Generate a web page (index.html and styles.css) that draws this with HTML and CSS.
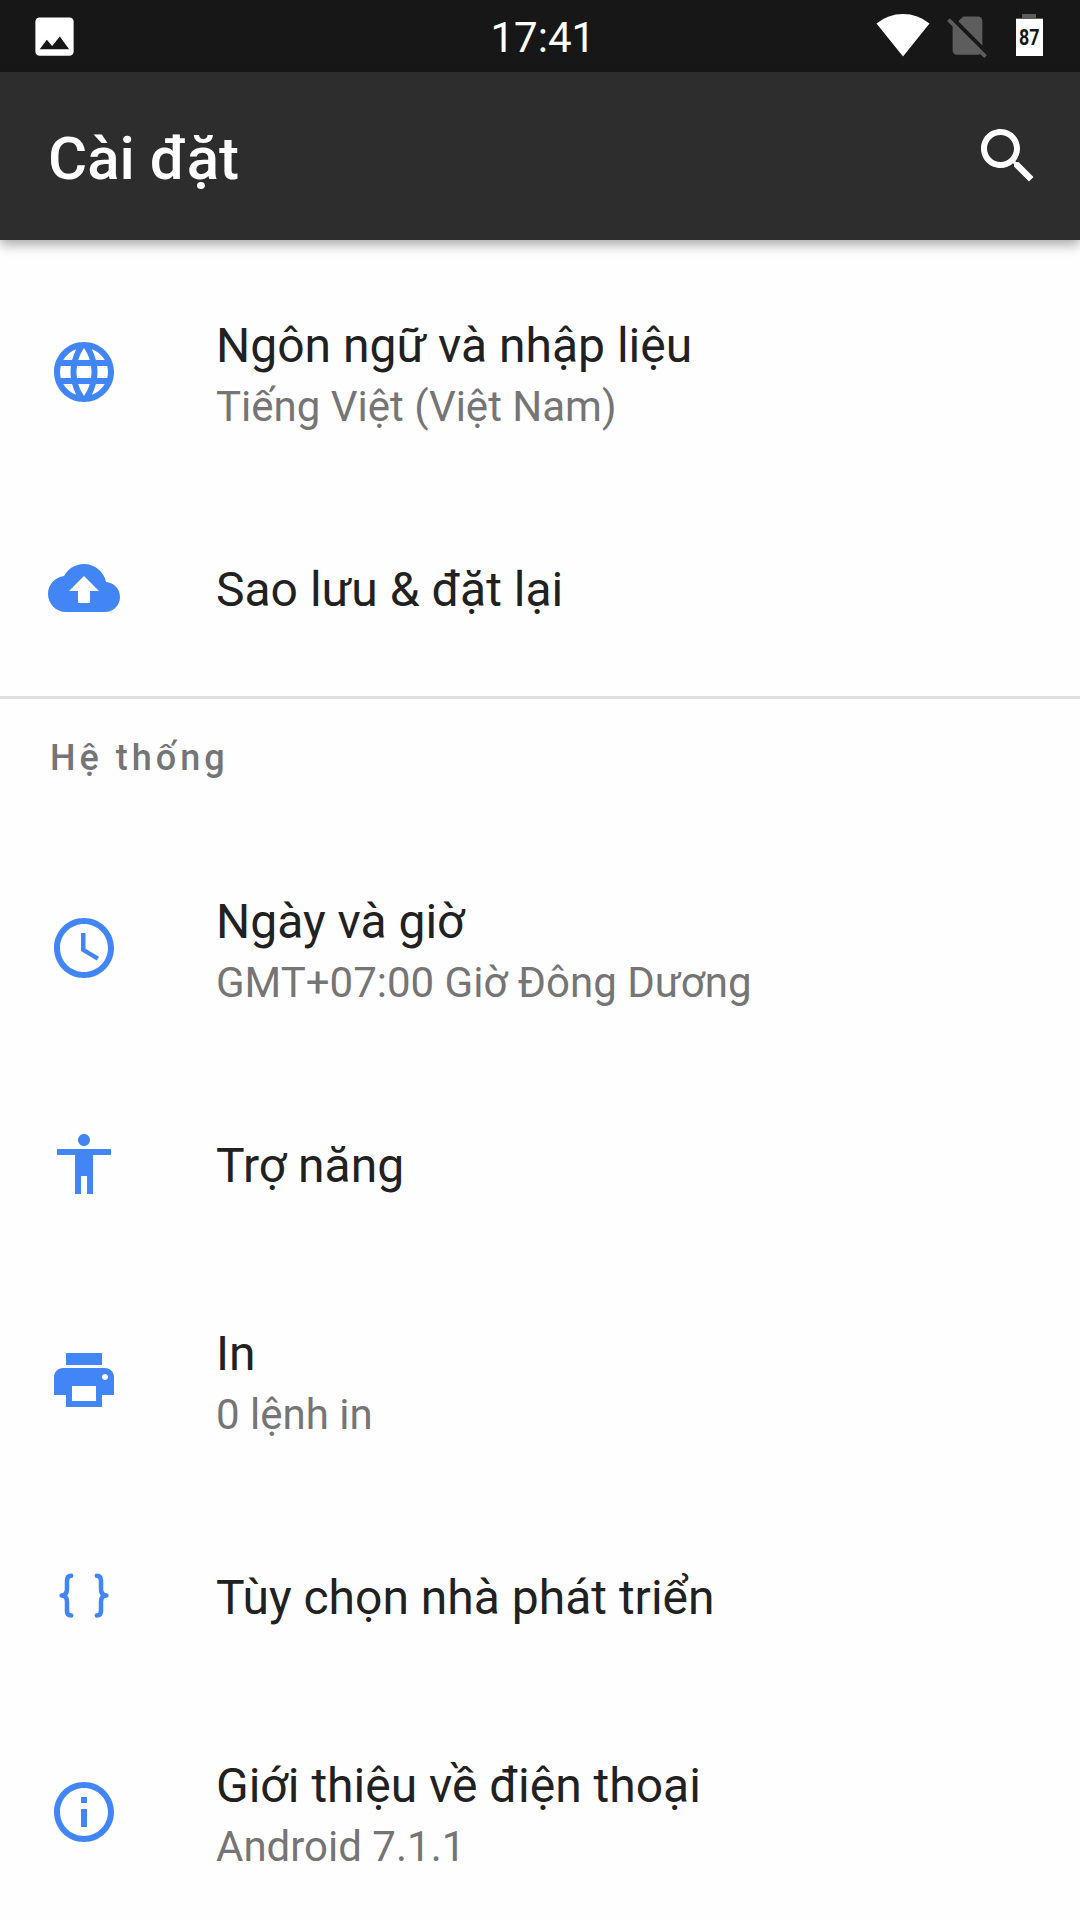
FILE: index.html
```html
<!DOCTYPE html>
<html lang="vi">
<head>
    <meta charset="UTF-8">
    <meta name="viewport" content="width=device-width, initial-scale=1.0">
    <title>Cài đặt</title>
    <link rel="stylesheet" href="styles.css">
</head>
<body>

<div class="status-bar">
    <div class="status-left">
        <svg class="status-icon" viewBox="0 0 24 24"><path d="M21 19V5a2 2 0 0 0-2-2H5a2 2 0 0 0-2 2v14a2 2 0 0 0 2 2h14a2 2 0 0 0 2-2z" fill="#fff"/><path d="M5 18l3.4-4.5 2.5 3L14.5 12l4.4 6z" fill="#171717"/></svg>
    </div>
    <div class="clock">17:41</div>
    <div class="status-right">
        <svg class="wifi" viewBox="0 0 54 44"><path d="M0.5 10.5Q12 1 27 1T53.5 10.5L27 43.5z"/></svg>
        <svg class="status-icon no-sim" viewBox="0 0 24 24"><path d="M18.99 5c0-1.1-.89-2-1.99-2h-7L7.66 5.34 19 16.68 18.99 5zM3.65 3.88L2.38 5.15 5 7.77V19c0 1.1.9 2 2 2h10.01c.35 0 .67-.1.96-.26l1.88 1.88 1.27-1.27L3.65 3.88z"/></svg>
        <svg class="battery" viewBox="0 0 27 42">
            <path d="M6 0h14v4h7v2H0V4h6z" fill="#5d5d5d"/>
            <path d="M0 5h27v37H0z" fill="#fff"/>
            <text x="3" y="31" textLength="20.5" lengthAdjust="spacingAndGlyphs">87</text>
        </svg>
    </div>
</div>

<div class="toolbar">
    <h1>Cài đặt</h1>
    <svg class="icon" viewBox="0 0 24 24"><path d="M15.5 14h-.79l-.28-.27C15.41 12.59 16 11.11 16 9.5 16 5.91 13.09 3 9.5 3S3 5.91 3 9.5 5.91 16 9.5 16c1.61 0 3.09-.59 4.23-1.57l.27.28v.79l5 4.99L20.49 19l-4.99-5zm-6 0C7.01 14 5 11.99 5 9.5S7.01 5 9.5 5 14 7.01 14 9.5 11.99 14 9.5 14z"/></svg>
</div>

<div class="settings">
    <div class="row">
        <svg class="icon" viewBox="0 0 24 24"><path d="M11.99 2C6.47 2 2 6.48 2 12s4.47 10 9.99 10C17.52 22 22 17.52 22 12S17.52 2 11.99 2zm6.93 6h-2.95c-.32-1.25-.78-2.45-1.38-3.56 1.84.63 3.37 1.91 4.33 3.56zM12 4.04c.83 1.2 1.48 2.53 1.91 3.96h-3.82c.43-1.43 1.08-2.76 1.91-3.96zM4.26 14C4.1 13.36 4 12.69 4 12s.1-1.36.26-2h3.38c-.08.66-.14 1.32-.14 2s.06 1.34.14 2H4.26zm.82 2h2.95c.32 1.25.78 2.45 1.38 3.56-1.84-.63-3.37-1.9-4.33-3.56zm2.95-8H5.08c.96-1.66 2.49-2.93 4.33-3.56C8.81 5.55 8.35 6.75 8.03 8zM12 19.96c-.83-1.2-1.48-2.53-1.91-3.96h3.82c-.43 1.43-1.08 2.76-1.91 3.96zM14.34 14H9.66c-.09-.66-.16-1.32-.16-2s.07-1.35.16-2h4.68c.09.65.16 1.32.16 2s-.07 1.34-.16 2zm.25 5.56c.6-1.11 1.06-2.31 1.38-3.56h2.95c-.96 1.65-2.49 2.93-4.33 3.56zM16.36 14c.08-.66.14-1.32.14-2s-.06-1.34-.14-2h3.38c.16.64.26 1.31.26 2s-.1 1.36-.26 2h-3.38z"/></svg>
        <div class="label">
            <div class="title">Ngôn ngữ và nhập liệu</div>
            <div class="summary">Tiếng Việt (Việt Nam)</div>
        </div>
    </div>
    <div class="row">
        <svg class="icon" viewBox="0 0 24 24"><path d="M19.35 10.04C18.67 6.59 15.64 4 12 4 9.11 4 6.6 5.64 5.35 8.04 2.34 8.36 0 10.91 0 14c0 3.31 2.69 6 6 6h13c2.76 0 5-2.24 5-5 0-2.64-2.05-4.78-4.65-4.96zM14 13v4h-4v-4H7l5-5 5 5h-3z"/></svg>
        <div class="label">
            <div class="title">Sao lưu &amp; đặt lại</div>
        </div>
    </div>

    <div class="category">Hệ thống</div>

    <div class="row">
        <svg class="icon" viewBox="0 0 24 24"><path d="M11.99 2C6.47 2 2 6.48 2 12s4.47 10 9.99 10C17.52 22 22 17.52 22 12S17.52 2 11.99 2zM12 20c-4.42 0-8-3.58-8-8s3.58-8 8-8 8 3.58 8 8-3.58 8-8 8z"/><path d="M12.5 7H11v6l5.25 3.15.75-1.23-4.5-2.67z"/></svg>
        <div class="label">
            <div class="title">Ngày và giờ</div>
            <div class="summary">GMT+07:00 Giờ Đông Dương</div>
        </div>
    </div>
    <div class="row">
        <svg class="icon" viewBox="0 0 24 24"><path d="M12 2c1.1 0 2 .9 2 2s-.9 2-2 2-2-.9-2-2 .9-2 2-2zm9 7h-6v13h-2v-6h-2v6H9V9H3V7h18v2z"/></svg>
        <div class="label">
            <div class="title">Trợ năng</div>
        </div>
    </div>
    <div class="row">
        <svg class="icon" viewBox="0 0 24 24"><path d="M19 8H5c-1.66 0-3 1.34-3 3v6h4v4h12v-4h4v-6c0-1.66-1.34-3-3-3zm-3 11H8v-5h8v5zm3-7c-.55 0-1-.45-1-1s.45-1 1-1 1 .45 1 1-.45 1-1 1zm-1-9H6v4h12V3z"/></svg>
        <div class="label">
            <div class="title">In</div>
            <div class="summary">0 lệnh in</div>
        </div>
    </div>
    <div class="row">
        <svg class="icon braces" viewBox="0 0 72 72"><path d="M23.2 15.7C20.5 15.7 19 17.5 19 20.5V29C19 33 17.5 35.4 13.6 35.4C17.5 35.4 19 37.8 19 41.8V50.7C19 53.7 20.5 55.5 23.2 55.5"/><path d="M48.8 15.7C51.5 15.7 53 17.5 53 20.5V29C53 33 54.5 35.4 58.4 35.4C54.5 35.4 53 37.8 53 41.8V50.7C53 53.7 51.5 55.5 48.8 55.5"/></svg>
        <div class="label">
            <div class="title">Tùy chọn nhà phát triển</div>
        </div>
    </div>
    <div class="row">
        <svg class="icon" viewBox="0 0 24 24"><path d="M11 17h2v-6h-2v6zm1-15C6.48 2 2 6.48 2 12s4.48 10 10 10 10-4.48 10-10S17.52 2 12 2zm0 18c-4.41 0-8-3.59-8-8s3.59-8 8-8 8 3.59 8 8-3.59 8-8 8zM11 9h2V7h-2v2z"/></svg>
        <div class="label">
            <div class="title">Giới thiệu về điện thoại</div>
            <div class="summary">Android 7.1.1</div>
        </div>
    </div>
</div>

</body>
</html>
```
FILE: styles.css
```css
body {
    margin: 0;
    height: 1920px;
    overflow: hidden;
    display: flex;
    flex-direction: column;
    font-family: Roboto, sans-serif;
    background-color: #fefefe;
    color: #212121;
}

svg {
    display: block;
    flex-shrink: 0;
}

.status-bar {
    display: grid;
    grid-template-columns: 1fr auto 1fr;
    box-sizing: border-box;
    height: 72px;
    padding: 0 37px 0 28.6px;
    background-color: #171717;
    color: white;
}

.status-left {
    padding-top: 10.6px;
}

.status-icon {
    width: 51px;
    height: 51px;
}

.clock {
    padding-left: 14px;
    font-size: 42px;
    line-height: 76px;
}

.status-right {
    display: flex;
    justify-content: flex-end;
    align-items: flex-start;
    padding-top: 10px;
}

.wifi {
    width: 54px;
    height: 44px;
    margin-top: 3px;
    margin-right: 12.5px;
    fill: white;
}

.no-sim {
    margin-right: 23px;
    fill: #5d5d5d;
}

.battery {
    width: 27px;
    height: 42px;
    margin-top: 4px;
}

.battery text {
    font-size: 22px;
    font-weight: bold;
    fill: #171717;
}

.toolbar {
    display: flex;
    justify-content: space-between;
    align-items: center;
    height: 168px;
    padding: 0 36px 0 48px;
    background-color: #2d2d2d;
    color: white;
    box-shadow: 0 5px 11px rgba(0, 0, 0, 0.33);
}

.toolbar h1 {
    margin: 0;
    padding-top: 4px;
    font-size: 60px;
    font-weight: 500;
}

.icon {
    width: 72px;
    height: 72px;
    fill: currentColor;
}

.settings {
    padding-top: 24px;
}

.row {
    display: flex;
    align-items: center;
    gap: 96px;
    height: 216px;
    padding-left: 48px;
}

.row .icon {
    color: #4285f4;
}

.row .braces {
    fill: none;
    stroke: currentColor;
    stroke-width: 4.5;
    stroke-linecap: round;
    stroke-linejoin: round;
}

.label {
    padding-top: 3px;
    white-space: nowrap;
}

.title {
    font-size: 48px;
    line-height: 66px;
}

.summary {
    font-size: 42px;
    line-height: 56px;
    color: #757575;
}

.category {
    box-sizing: border-box;
    height: 144px;
    padding: 38px 50px 0;
    border-top: 3px solid #e0e0e0;
    font-size: 36px;
    font-weight: 500;
    line-height: 42px;
    letter-spacing: 4px;
    color: #757575;
}
```
